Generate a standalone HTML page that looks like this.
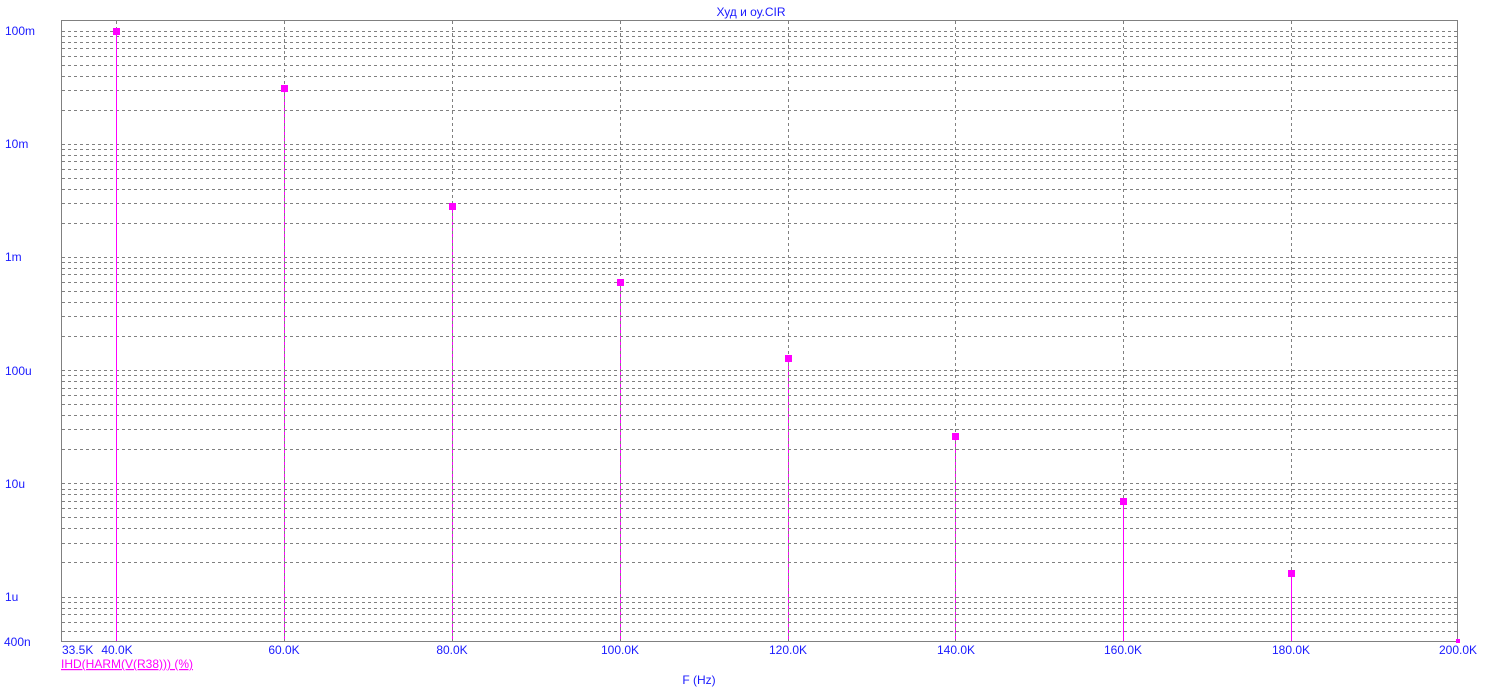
<!DOCTYPE html>
<html><head><meta charset="utf-8"><style>
html,body{margin:0;padding:0;background:#fff;}
svg{display:block;}
text{font-family:"Liberation Sans",sans-serif;font-size:12px;fill:#1a1aff;}
</style></head><body>
<svg width="1490" height="700" xmlns="http://www.w3.org/2000/svg">
<g stroke="#808080" stroke-width="1" stroke-dasharray="3 3" shape-rendering="crispEdges" fill="none">
<path d="M62 31.5H1458M62 36.5H1458M62 42.5H1458M62 48.5H1458M62 56.5H1458M62 65.5H1458M62 76.5H1458M62 90.5H1458M62 110.5H1458M62 144.5H1458
M62 149.5H1458M62 155.5H1458M62 161.5H1458M62 169.5H1458M62 178.5H1458M62 189.5H1458M62 203.5H1458M62 223.5H1458M62 257.5H1458
M62 262.5H1458M62 268.5H1458M62 274.5H1458M62 282.5H1458M62 291.5H1458M62 302.5H1458M62 316.5H1458M62 336.5H1458M62 370.5H1458
M62 375.5H1458M62 381.5H1458M62 388.5H1458M62 395.5H1458M62 404.5H1458M62 415.5H1458M62 429.5H1458M62 449.5H1458M62 483.5H1458
M62 489.5H1458M62 494.5H1458M62 501.5H1458M62 508.5H1458M62 517.5H1458M62 528.5H1458M62 543.5H1458M62 562.5H1458M62 597.5H1458
M62 602.5H1458M62 608.5H1458M62 614.5H1458M62 622.5H1458M62 631.5H1458"/>
<path d="M116.5 21V641M1123.5 21V641M1291.5 21V641"/>
</g>
<g stroke="#ff00ff" stroke-width="1" shape-rendering="crispEdges">
<path d="M116.5 32V641M284.5 89V641M452.5 207V641M620.5 283V641M788.5 359V641M955.5 437V641M1123.5 502V641M1291.5 574V641"/>
</g>
<g stroke="#808080" stroke-width="1" stroke-dasharray="3 3" shape-rendering="crispEdges" fill="none">
<path d="M284.5 21V641M452.5 21V641M620.5 21V641M788.5 21V641M955.5 21V641"/>
</g>
<rect x="61.5" y="20.5" width="1396" height="621" fill="none" stroke="#808080" stroke-width="1" shape-rendering="crispEdges"/>
<g fill="#ff00ff">
<rect x="113" y="28" width="7" height="7"/>
<rect x="281" y="85" width="7" height="7"/>
<rect x="449" y="203" width="7" height="7"/>
<rect x="617" y="279" width="7" height="7"/>
<rect x="785" y="355" width="7" height="7"/>
<rect x="952" y="433" width="7" height="7"/>
<rect x="1120" y="498" width="7" height="7"/>
<rect x="1288" y="570" width="7" height="7"/>
<rect x="1456" y="639" width="4" height="4"/>
</g>
<text x="751" y="16" text-anchor="middle">Худ и оу.CIR</text>
<text x="5" y="35">100m</text>
<text x="5" y="148">10m</text>
<text x="5" y="261">1m</text>
<text x="5" y="375">100u</text>
<text x="5" y="488">10u</text>
<text x="5" y="601">1u</text>
<text x="4" y="646">400n</text>
<text x="62" y="654">33.5K</text>
<text x="117" y="654" text-anchor="middle">40.0K</text>
<text x="284" y="654" text-anchor="middle">60.0K</text>
<text x="452" y="654" text-anchor="middle">80.0K</text>
<text x="620" y="654" text-anchor="middle">100.0K</text>
<text x="788" y="654" text-anchor="middle">120.0K</text>
<text x="956" y="654" text-anchor="middle">140.0K</text>
<text x="1123" y="654" text-anchor="middle">160.0K</text>
<text x="1291" y="654" text-anchor="middle">180.0K</text>
<text x="1458" y="654" text-anchor="middle">200.0K</text>
<text x="61" y="668" style="fill:#ff00ff;text-decoration:underline">IHD(HARM(V(R38))) (%)</text>
<text x="699" y="684" text-anchor="middle">F (Hz)</text>
</svg>
</body></html>
